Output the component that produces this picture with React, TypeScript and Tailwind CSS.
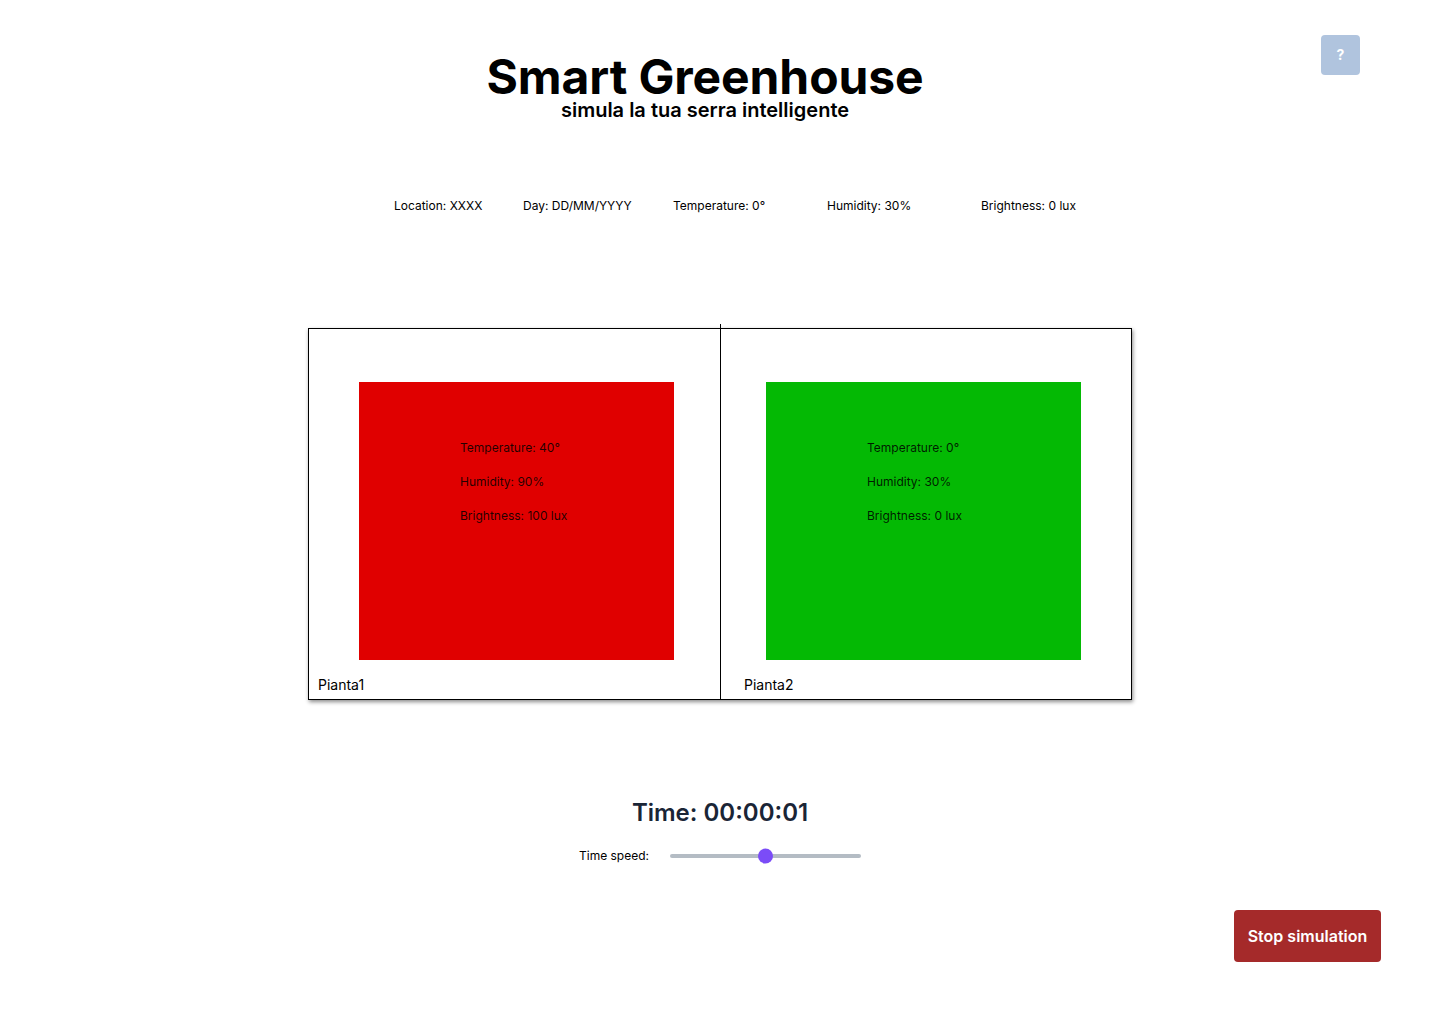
import React from "react";

// Simple greenhouse simulator screen: header, current readings, two plant cells,
// a clock with a speed slider and the stop button.
type Plant = {
  name: string;
  color: string;
  temperature: string;
  humidity: string;
  brightness: string;
  offset: string;
  labelOffset: string;
};

const plants: Plant[] = [
  {
    name: "Pianta1",
    color: "bg-[#e00000]",
    temperature: "40°",
    humidity: "90%",
    brightness: "100 lux",
    offset: "ml-[50px]",
    labelOffset: "pl-[9px]",
  },
  {
    name: "Pianta2",
    color: "bg-[#04b904]",
    temperature: "0°",
    humidity: "30%",
    brightness: "0 lux",
    offset: "ml-[45px]",
    labelOffset: "pl-[23px]",
  },
];

function PlantCell({ plant, className }: { plant: Plant; className: string }) {
  return (
    <div className={`flex flex-col ${className}`}>
      <div className={`mt-[53px] h-[278px] w-[315px] ${plant.offset} ${plant.color}`}>
        <div className="mt-[58px] ml-[101px] flex flex-col gap-[18px] text-xs leading-4 text-black/85">
          <span>Temperature: {plant.temperature}</span>
          <span>Humidity: {plant.humidity}</span>
          <span>Brightness: {plant.brightness}</span>
        </div>
      </div>
      <span className={`mt-[15px] text-sm leading-5 text-black ${plant.labelOffset}`}>{plant.name}</span>
    </div>
  );
}

export default function App() {
  return (
    <div className="relative min-h-[1024px] w-full bg-white font-['Inter',sans-serif] text-black">
      <button className="absolute right-[80px] top-[35px] flex h-10 w-[39px] items-center justify-center rounded bg-[#b0c4de] text-sm font-bold text-white">
        ?
      </button>

      <header className="flex flex-col items-center pt-[53px] pr-[30px]">
        <h1 className="text-5xl leading-[48px] font-bold tracking-[-0.1px]">Smart Greenhouse</h1>
        <p className="-mt-px text-xl leading-5 font-semibold">simula la tua serra intelligente</p>
      </header>

      <div className="mt-[78px] flex pl-[394px] text-xs leading-4">
        <span className="w-[129px]">Location: XXXX</span>
        <span className="w-[150px]">Day: DD/MM/YYYY</span>
        <span className="w-[154px]">Temperature: 0°</span>
        <span className="w-[154px]">Humidity: 30%</span>
        <span>Brightness: 0 lux</span>
      </div>

      <div className="mt-[114px] flex justify-center">
        <div className="flex h-[372px] w-[824px] border border-black shadow-[1px_2px_4px_rgba(0,0,0,0.45)]">
          <PlantCell plant={plants[0]} className="w-[411px]" />
          <div className="-mt-[5px] w-px bg-black" />
          <PlantCell plant={plants[1]} className="w-[410px]" />
        </div>
      </div>

      <div className="mt-[97px] flex flex-col items-center">
        <h2 className="text-2xl leading-8 font-semibold text-[#1a2536]">Time: 00:00:01</h2>
        <div className="mt-[19px] flex items-center">
          <span className="w-[91px] text-xs leading-4 text-black">Time speed:</span>
          <div className="relative h-[4px] w-[191px] rounded-full bg-[#b4bcc4]">
            <div className="absolute left-[88px] top-1/2 h-[15px] w-[15px] -translate-y-1/2 rounded-full bg-[#7b4cf7]" />
          </div>
        </div>
      </div>

      <div className="mt-[46px] flex justify-end pr-[59px]">
        <button className="h-[52px] w-[147px] rounded bg-[#a52a2a] text-base font-semibold text-white">
          Stop simulation
        </button>
      </div>
    </div>
  );
}
